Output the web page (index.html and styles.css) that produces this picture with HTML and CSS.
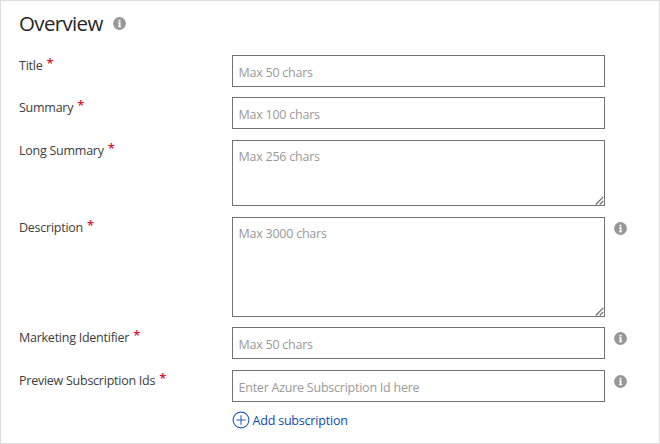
FILE: index.html
```html
<!DOCTYPE html>
<html lang="en">
<head>
<meta charset="utf-8">
<title>Overview</title>
<link rel="stylesheet" href="styles.css">
</head>
<body>
<svg class="defs" width="0" height="0" aria-hidden="true">
  <symbol id="info" viewBox="0 0 13 13">
    <circle cx="6.5" cy="6.5" r="6.4" fill="#979797"/>
    <path d="M5.6 2.8h1.9v1.6H5.6zM5 5.3h2.5v4h.7v.9H4.9v-.9h.8V6.2H5z" fill="#fff"/>
  </symbol>
  <symbol id="grip" viewBox="0 0 9 9">
    <path d="M.7 8.5 8.3.8M4.7 8.5l3.6-3.6" fill="none" stroke="#666" stroke-width="1.1"/>
  </symbol>
</svg>
<form class="panel">
  <h1 class="heading">Overview <svg class="info"><use href="#info"/></svg></h1>
  <div class="row snug">
    <label class="label" for="title">Title <span class="req">*</span></label>
    <input class="field" id="title" placeholder="Max 50 chars">
  </div>
  <div class="row">
    <label class="label" for="summary">Summary <span class="req">*</span></label>
    <input class="field" id="summary" placeholder="Max 100 chars">
  </div>
  <div class="row">
    <label class="label" for="long">Long Summary <span class="req">*</span></label>
    <div class="area"><textarea class="field medium" id="long" placeholder="Max 256 chars"></textarea><svg class="grip"><use href="#grip"/></svg></div>
  </div>
  <div class="row snug">
    <label class="label" for="desc">Description <span class="req">*</span></label>
    <div class="area"><textarea class="field tall" id="desc" placeholder="Max 3000 chars"></textarea><svg class="grip"><use href="#grip"/></svg></div>
    <svg class="info"><use href="#info"/></svg>
  </div>
  <div class="row">
    <label class="label" for="market">Marketing Identifier <span class="req">*</span></label>
    <input class="field" id="market" placeholder="Max 50 chars">
    <svg class="info"><use href="#info"/></svg>
  </div>
  <div class="row">
    <label class="label" for="ids">Preview Subscription Ids <span class="req">*</span></label>
    <input class="field" id="ids" placeholder="Enter Azure Subscription Id here">
    <svg class="info"><use href="#info"/></svg>
  </div>
  <a class="add"><svg class="plus" viewBox="0 0 18 18"><circle cx="9" cy="9" r="7.9"/><path d="M9 4.3v9.4M4.3 9h9.4"/></svg>Add subscription</a>
</form>
</body>
</html>
```
FILE: styles.css
```css
* { box-sizing: border-box; }
body {
  margin: 0;
  background: #fff;
  font-family: "Open Sans", "Noto Sans", sans-serif;
  font-size: 12.5px;
  color: #3c3c3c;
}
.defs { position: absolute; }
.panel {
  height: 444px;
  padding: 9px 0 0 18px;
  border: 1px solid #dcdcdc;
  display: flex;
  flex-direction: column;
}
.heading {
  display: flex;
  align-items: center;
  gap: 10px;
  height: 26px;
  margin: 0 0 19px;
  font-size: 20.5px;
  font-weight: 400;
  letter-spacing: -0.65px;
  color: #262626;
}
.info { width: 13px; height: 13px; flex: none; }
.row {
  display: grid;
  grid-template-columns: 213px 373px 22px;
  align-items: start;
  margin-bottom: 11px;
}
.snug { margin-bottom: 10px; }
.row .info { margin: 5px 0 0 8.5px; }
.label {
  line-height: 18px;
  padding-top: 2px;
  letter-spacing: -0.25px;
  white-space: nowrap;
}
.req {
  position: relative;
  top: -2px;
  margin-left: 1px;
  font-size: 13px;
  font-weight: 600;
  line-height: 1;
  color: #e0142d;
}
.field {
  display: block;
  width: 373px;
  height: 32px;
  margin: 0;
  padding: 2px 6px 0 5.5px;
  border: 1px solid #737373;
  border-radius: 0;
  background: #fff;
  font: inherit;
  letter-spacing: -0.24px;
  outline: none;
  resize: none;
}
.field::placeholder { color: #999; opacity: 1; }
textarea.field { padding-top: 7px; line-height: 18px; }
.medium { height: 66px; }
.tall { height: 100px; }
.area { position: relative; }
.grip { position: absolute; right: 1px; bottom: 1px; width: 9px; height: 9px; }
.add {
  display: flex;
  align-items: center;
  gap: 3px;
  margin: -2px 0 0 212.5px;
  height: 18px;
  color: #0b4bb3;
  letter-spacing: -0.2px;
}
.plus { width: 18px; height: 18px; fill: none; stroke: #2a5fb8; stroke-width: 1.1; }
```
